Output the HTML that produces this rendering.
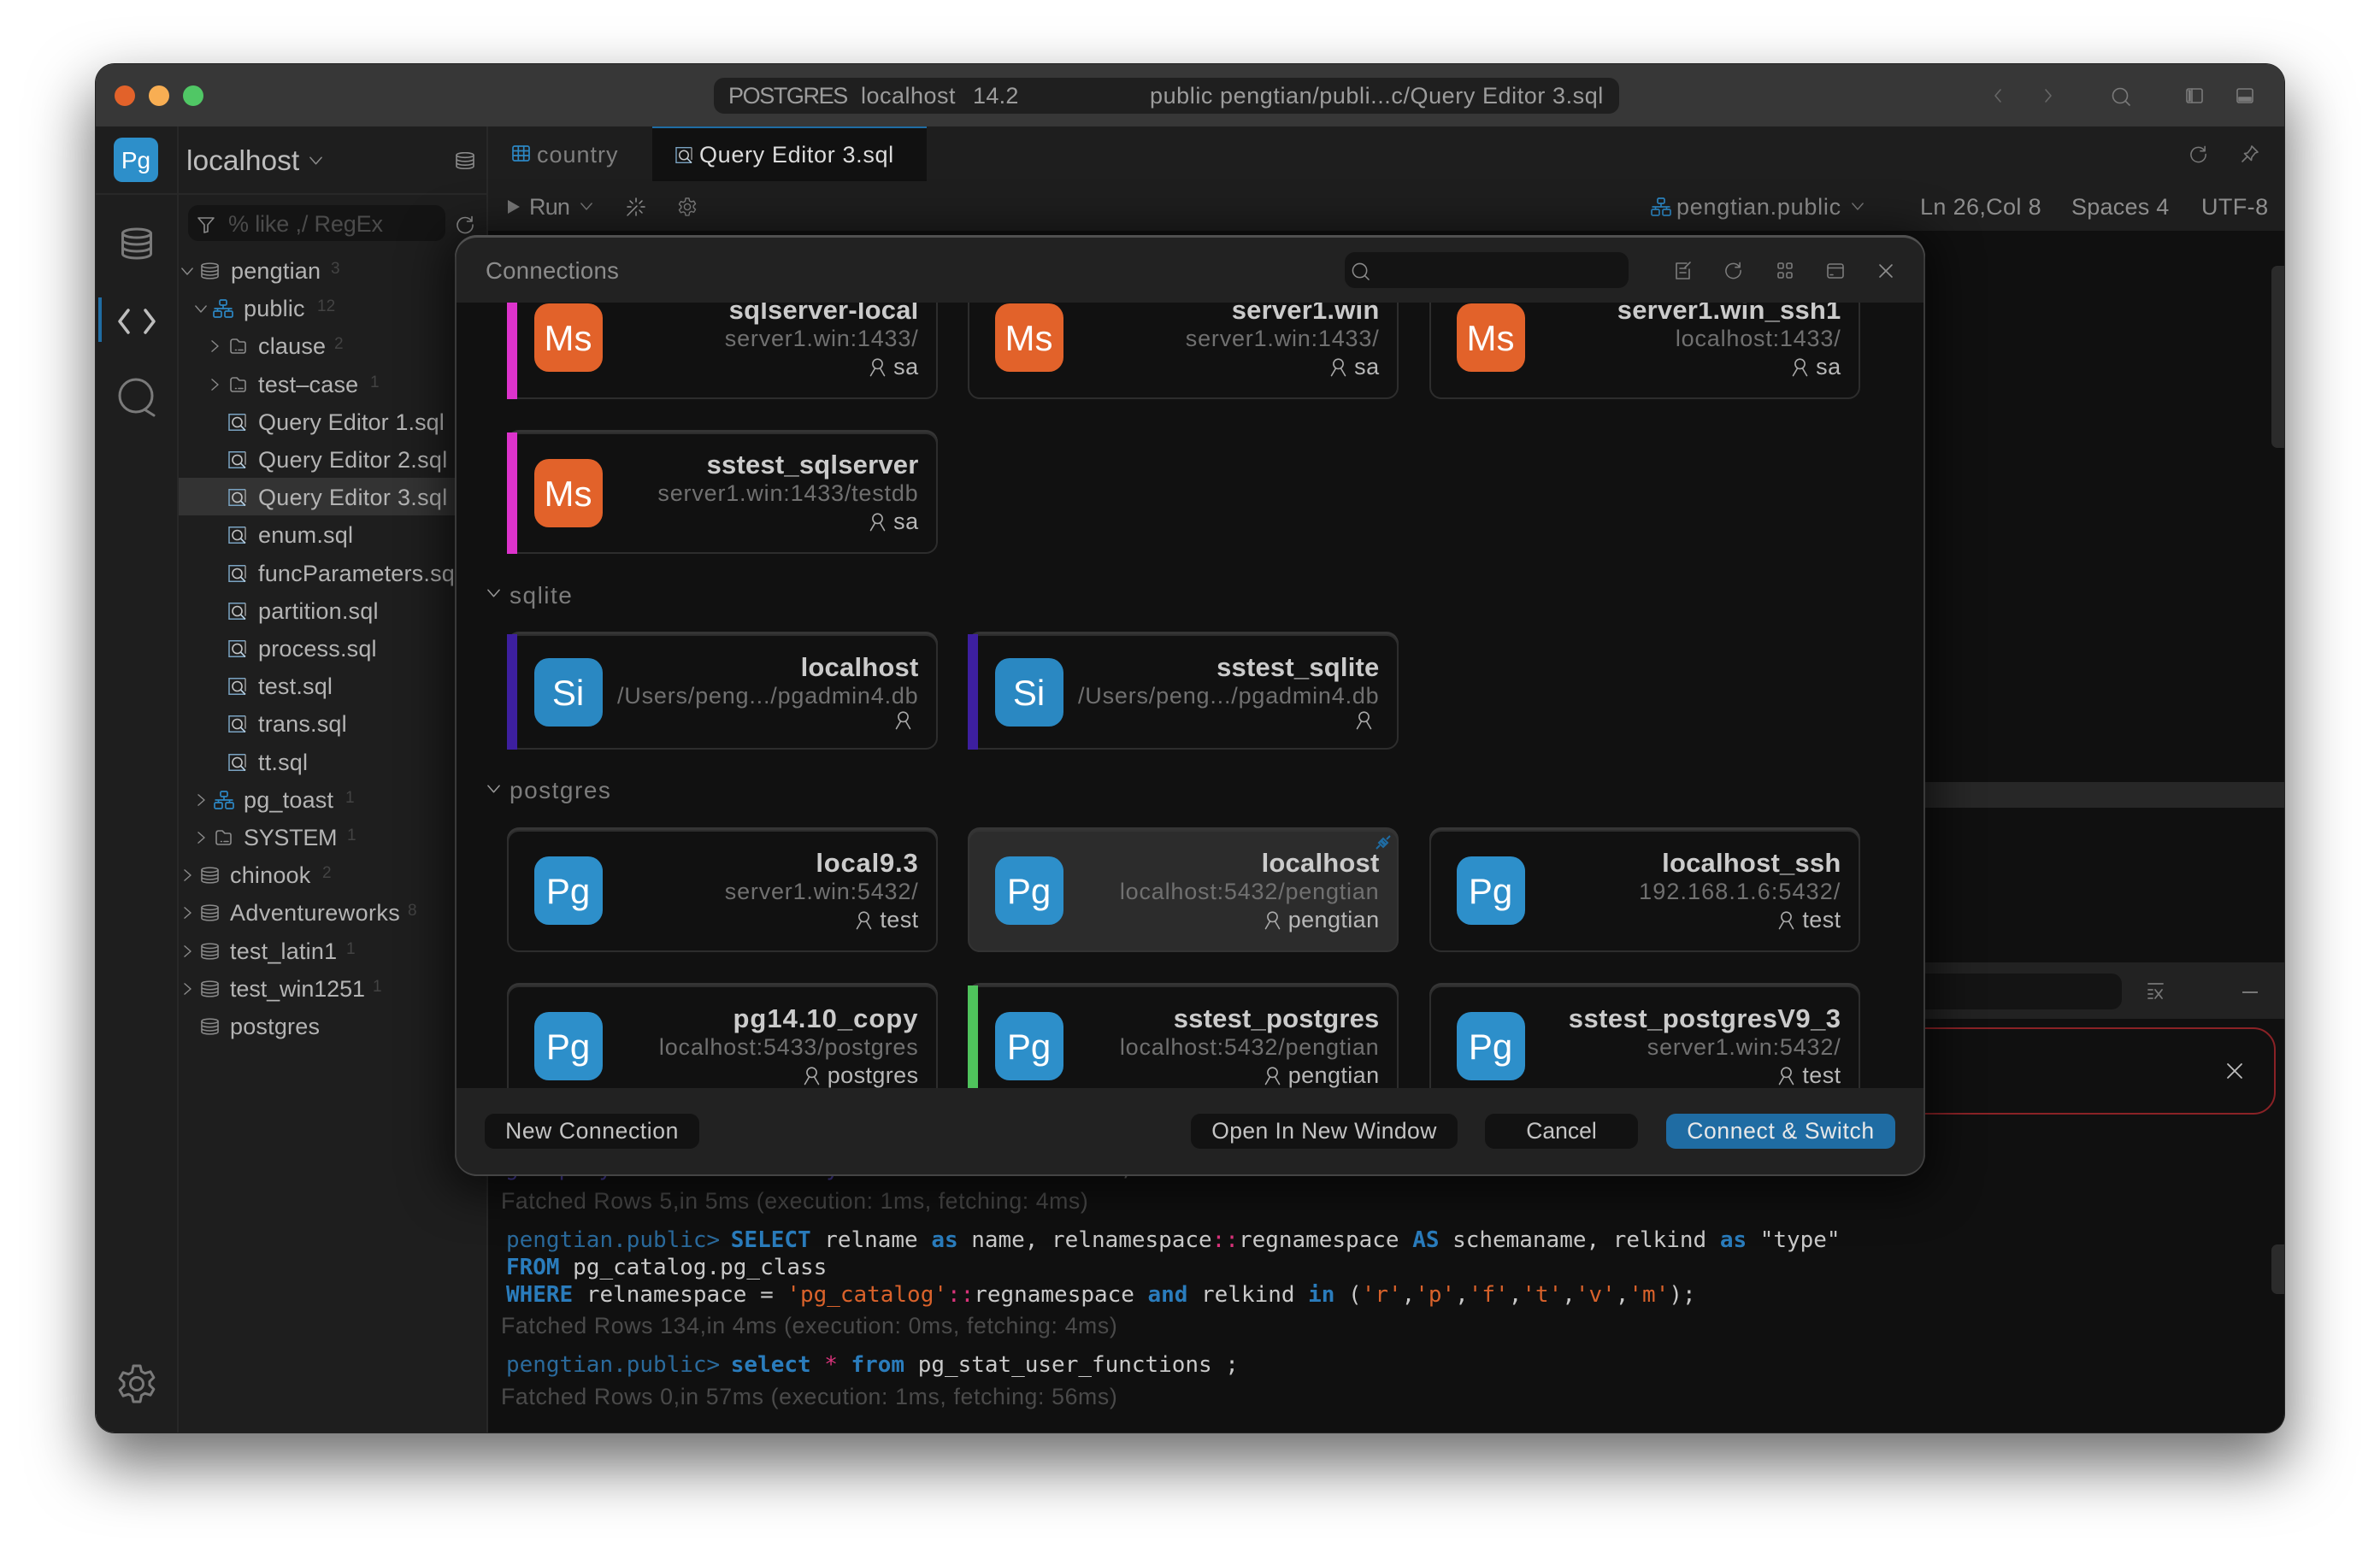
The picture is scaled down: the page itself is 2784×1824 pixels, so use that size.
<!DOCTYPE html>
<html><head><meta charset="utf-8"><title>Connections</title>
<style>
*{box-sizing:border-box}
html,body{margin:0;padding:0;background:#fff}
body{width:2784px;height:1824px;position:relative;overflow:hidden;font-family:"Liberation Sans",Arial,sans-serif}
.a{position:absolute;white-space:nowrap}
svg{position:absolute;overflow:visible;fill:none}
#win{position:absolute;left:112px;top:75px;width:2560px;height:1601px;border-radius:22px;overflow:hidden;box-shadow:0 0 0 1px #222,0 34px 70px 6px rgba(0,0,0,.55)}
#in{position:absolute;left:-112px;top:-75px;width:2784px;height:1824px;background:#1e1e1e}
.r{position:absolute;left:0;width:330px;height:36px}
.t{position:absolute;top:0;font-size:27px;line-height:36px;color:#b4b4b4;white-space:nowrap;letter-spacing:.2px}
.c{position:absolute;top:0;font-size:19px;line-height:32px;color:#434343}
.m{font-family:"DejaVu Sans Mono","Liberation Mono",monospace;font-size:25.98px;line-height:32px;color:#c9c9c9}
.k{color:#2a7cbc;font-weight:bold}.p{color:#2a6a9c}.s{color:#d9622b}.o{color:#d8337a}
.n{margin-left:-3px}
.f{font-size:26.7px;line-height:32px;color:#4a4a4a;letter-spacing:.57px}
#modal{position:absolute;left:532px;top:275px;width:1720px;height:1101px;border-radius:26px;background:#222;overflow:hidden;box-shadow:0 8px 50px 14px rgba(0,0,0,.55),inset 0 3px 0 #505050,inset 0 -2px 0 #454545,inset 2px 0 0 #3a3a3a,inset -2px 0 0 #3a3a3a}
#mb{position:absolute;left:2px;top:79px;width:1716px;height:919px;background:#111;overflow:hidden}
.card{position:absolute;width:504px;height:143px;border:2px solid #2d2d2d;border-radius:14px;box-shadow:0 -3px 0 #353535;background:#111}
.hv{background:#2c2c2c}
.bar{position:absolute;left:-2px;top:-2px;bottom:-2px;width:12px}
.ic{position:absolute;left:30px;top:29px;width:80px;height:80px;border-radius:17px;color:#fff;font-size:42px;line-height:82px;text-align:center}
.ms{background:#e2622a}.pg{background:#2d8fca}.si{background:#2a88c2}
.ti{position:absolute;right:20px;top:21px;font-weight:bold;font-size:31px;line-height:32px;letter-spacing:.2px;color:#cbcbcb;white-space:nowrap}
.ho{position:absolute;right:20px;top:54px;font-size:27px;line-height:32px;letter-spacing:.8px;color:#707070;white-space:nowrap}
.us{position:absolute;right:20px;top:87px;font-size:27px;line-height:32px;letter-spacing:.4px;color:#b8b8b8;white-space:nowrap}
.us svg{position:relative;display:inline-block;width:19px;height:22px;vertical-align:-3px;margin-right:9px}
.btn{position:absolute;height:41px;border-radius:11px;background:#121212;color:#c4c4c4;font-size:26.5px;line-height:41px;text-align:center;white-space:nowrap}
.g{stroke:#8a8a8a;stroke-width:1.6;stroke-linecap:round;stroke-linejoin:round}
.b{stroke:#2d87c4;stroke-width:1.7}
</style></head><body>
<svg width="0" height="0" style="position:absolute">
<defs>
<symbol id="db" viewBox="0 0 22 20"><ellipse cx="11" cy="3.5" rx="10" ry="2.8"/><path d="M1 3.5v13c0 1.6 4.5 2.8 10 2.8s10-1.2 10-2.8v-13M1 8c0 1.6 4.5 2.8 10 2.8S21 9.6 21 8M1 12.4c0 1.6 4.5 2.8 10 2.8s10-1.2 10-2.8"/></symbol>
<symbol id="q" viewBox="0 0 21 20"><path d="M20 .7H1v18.6h19" stroke="#7aa3c2" stroke-width="1.5"/><path d="M20 .7v15" stroke="#9a9a9a" stroke-width="1.5"/><circle cx="10.5" cy="10" r="5.5" stroke="#c4c4c4" stroke-width="1.6"/><path d="M14.5 14l5.5 5.5" stroke="#b8cfe0" stroke-width="1.6"/></symbol>
<symbol id="fo" viewBox="0 0 19 18"><path d="M1 4q0-3 3-3h4l3 3h5q2 0 2 2v8.5q0 2.5-2.5 2.5h-12Q1 17 1 14.5z"/><path d="M10 13.5h5M6.5 13.5h.8"/></symbol>
<symbol id="sc" viewBox="0 0 24 22"><rect x="8" y="1" width="8" height="6" rx="1.5"/><rect x="1" y="14" width="9" height="7" rx="1.5"/><rect x="14" y="14" width="9" height="7" rx="1.5"/><path d="M12 7v4M1.5 11h21M5.5 11v3M18.5 11v3"/></symbol>
<symbol id="u" viewBox="0 0 19 22"><circle cx="9.5" cy="6.8" r="5.6"/><path d="M6.5 12L1.5 20.5M12.5 12l5 8.5"/></symbol>
<symbol id="cr" viewBox="0 0 10 16"><path d="M1 1l8 7-8 7"/></symbol>
<symbol id="cd" viewBox="0 0 16 10"><path d="M1 1l7 8 7-8"/></symbol>
<symbol id="re" viewBox="0 0 22 22"><path d="M18.5 6.5A9 9 0 1 0 20 11M19 1.5V7h-5.5"/></symbol>
</defs>
</svg>
<div id="win"><div id="in">

<!-- titlebar -->
<div class="a" style="left:112px;top:75px;width:2560px;height:73px;background:#373737"></div>
<div class="a" style="left:134px;top:100px;width:24px;height:24px;border-radius:50%;background:#e2622a"></div>
<div class="a" style="left:174px;top:100px;width:24px;height:24px;border-radius:50%;background:#f8ae53"></div>
<div class="a" style="left:214px;top:100px;width:24px;height:24px;border-radius:50%;background:#50c765"></div>
<div class="a" style="left:835px;top:91px;width:1059px;height:42px;border-radius:12px;background:#1f1f1f"></div>
<div class="a" style="left:852px;top:96px;font-size:27px;line-height:32px;color:#9c9c9c;letter-spacing:-1.4px">POSTGRES</div>
<div class="a" style="left:1007px;top:96px;font-size:27px;line-height:32px;color:#9c9c9c;letter-spacing:.5px">localhost</div>
<div class="a" style="left:1138px;top:96px;font-size:27px;line-height:32px;color:#9c9c9c;letter-spacing:.3px">14.2</div>
<div class="a" style="left:1345px;top:96px;font-size:27px;line-height:32px;color:#9c9c9c;letter-spacing:.57px">public pengtian/publi...c/Query Editor 3.sql</div>
<svg class="g" style="left:2332px;top:104px;stroke:#666" width="10" height="16" viewBox="0 0 10 16"><path d="M8 1L2 8l6 7"/></svg>
<svg class="g" style="left:2391px;top:104px;stroke:#666" width="10" height="16" viewBox="0 0 10 16"><path d="M2 1l6 7-6 7"/></svg>
<svg class="g" style="left:2470px;top:102px;stroke:#7a7a7a" width="22" height="22" viewBox="0 0 22 22"><circle cx="10" cy="10" r="8.5"/><path d="M16 16l5 5"/></svg>
<svg class="g" style="left:2557px;top:103px;stroke:#7a7a7a" width="20" height="18" viewBox="0 0 20 18"><rect x="1" y="1" width="18" height="16" rx="2"/><path d="M7 1v16M3 3h2v12H3" fill="#7a7a7a"/></svg>
<svg class="g" style="left:2616px;top:103px;stroke:#7a7a7a" width="20" height="18" viewBox="0 0 20 18"><rect x="1" y="1" width="18" height="16" rx="2"/><path d="M3 11h14v4H3z" fill="#7a7a7a"/></svg>

<!-- activity bar -->
<div class="a" style="left:207px;top:148px;width:2px;height:1528px;background:#282828"></div>
<div class="a" style="left:569px;top:148px;width:2px;height:1528px;background:#282828"></div>
<div class="a" style="left:112px;top:226px;width:458px;height:2px;background:#282828"></div>
<div class="a" style="left:133px;top:161px;width:52px;height:52px;border-radius:10px;background:#2d8fca;color:#fff;font-size:28px;line-height:54px;text-align:center">Pg</div>
<svg class="g" style="left:142px;top:267px;stroke:#7a7a7a;stroke-width:3" width="36" height="36" viewBox="0 0 36 36"><ellipse cx="18" cy="6" rx="16.5" ry="5"/><path d="M1.5 6v24c0 2.8 7.4 5 16.5 5s16.5-2.2 16.5-5V6M1.5 14c0 2.8 7.4 5 16.5 5s16.5-2.2 16.5-5M1.5 22c0 2.8 7.4 5 16.5 5s16.5-2.2 16.5-5"/></svg>
<div class="a" style="left:115px;top:348px;width:4px;height:52px;background:#1f6ca3"></div>
<svg class="g" style="left:138px;top:360px;stroke:#bdbdbd;stroke-width:3.5" width="44" height="32" viewBox="0 0 44 32"><path d="M12 3L2 16l10 13M32 3l10 13-10 13"/></svg>
<svg class="g" style="left:138px;top:443px;stroke:#7a7a7a;stroke-width:3" width="44" height="44" viewBox="0 0 44 44"><circle cx="21" cy="20" r="19"/><path d="M31 36l11 7"/></svg>
<svg class="g" style="left:137px;top:1596px;stroke:#7a7a7a;stroke-width:3" width="46" height="46" viewBox="0 0 46 46"><circle cx="23" cy="23" r="7.5"/><path d="M19 2h8l1.5 6.5 4 2.3 6.4-2 4 6.9-4.9 4.6v4.4l4.9 4.6-4 6.9-6.4-2-4 2.3L27 44h-8l-1.5-6.5-4-2.3-6.4 2-4-6.9 4.9-4.6v-4.4L3.1 16.7l4-6.9 6.4 2 4-2.3z"/></svg>

<!-- sidebar header -->
<div class="a" style="left:218px;top:171px;font-size:33.5px;line-height:36px;color:#bdbdbd">localhost</div>
<svg class="g" style="left:362px;top:183px;stroke:#8a8a8a" width="15" height="10"><use href="#cd"/></svg>
<svg class="g" style="left:533px;top:178px;stroke:#8a8a8a" width="22" height="20"><use href="#db"/></svg>
<div class="a" style="left:220px;top:240px;width:301px;height:42px;border-radius:12px;background:#141414"></div>
<svg class="g" style="left:231px;top:253px;stroke:#8a8a8a" width="20" height="20" viewBox="0 0 20 20"><path d="M1 2h18l-7 8v8l-4 1V10z"/></svg>
<div class="a" style="left:267px;top:246px;font-size:27px;line-height:32px;color:#4b4b4b;letter-spacing:-.15px">% like ,/ RegEx</div>
<svg class="g" style="left:533px;top:252px;stroke:#8c8c8c" width="22" height="22"><use href="#re"/></svg>

<!-- tree -->
<div class="a" style="left:209px;top:228px;width:323px;height:1200px;overflow:hidden"><div style="position:absolute;left:-209px;top:-229px;width:800px;height:1500px">
<div class="a" style="left:207px;top:560px;width:330px;height:44px;background:#333"></div>
<div class="r" style="top:300px"><svg class="g" style="left:212px;top:14px" width="14" height="9"><use href="#cd"/></svg><svg class="g" style="left:235px;top:8px" width="21" height="20"><use href="#db"/></svg><div class="t" style="left:270px">pengtian</div><div class="c" style="left:387px">3</div></div>
<div class="r" style="top:344px"><svg class="g" style="left:228px;top:14px" width="14" height="9"><use href="#cd"/></svg><svg class="b" style="left:249px;top:7px" width="24" height="22"><use href="#sc"/></svg><div class="t" style="left:285px">public</div><div class="c" style="left:371px">12</div></div>
<div class="r" style="top:388.4px"><svg class="g" style="left:247px;top:11px" width="9" height="14"><use href="#cr"/></svg><svg class="g" style="left:269px;top:9px" width="19" height="18"><use href="#fo"/></svg><div class="t" style="left:302px">clause</div><div class="c" style="left:391px">2</div></div>
<div class="r" style="top:432.6px"><svg class="g" style="left:247px;top:11px" width="9" height="14"><use href="#cr"/></svg><svg class="g" style="left:269px;top:9px" width="19" height="18"><use href="#fo"/></svg><div class="t" style="left:302px">test–case</div><div class="c" style="left:433px">1</div></div>
<div class="r" style="top:476.8px"><svg style="left:267px;top:8px" width="21" height="20"><use href="#q"/></svg><div class="t" style="left:302px;letter-spacing:.1px">Query Editor 1.sql</div></div>
<div class="r" style="top:521px"><svg style="left:267px;top:8px" width="21" height="20"><use href="#q"/></svg><div class="t" style="left:302px;letter-spacing:.3px">Query Editor 2.sql</div></div>
<div class="r" style="top:565px"><svg style="left:267px;top:8px" width="21" height="20"><use href="#q"/></svg><div class="t" style="left:302px;letter-spacing:.3px">Query Editor 3.sql</div></div>
<div class="r" style="top:609.4px"><svg style="left:267px;top:8px" width="21" height="20"><use href="#q"/></svg><div class="t" style="left:302px">enum.sql</div></div>
<div class="r" style="top:653.6px"><svg style="left:267px;top:8px" width="21" height="20"><use href="#q"/></svg><div class="t" style="left:302px">funcParameters.sql</div></div>
<div class="r" style="top:697.8px"><svg style="left:267px;top:8px" width="21" height="20"><use href="#q"/></svg><div class="t" style="left:302px">partition.sql</div></div>
<div class="r" style="top:742px"><svg style="left:267px;top:8px" width="21" height="20"><use href="#q"/></svg><div class="t" style="left:302px">process.sql</div></div>
<div class="r" style="top:786.2px"><svg style="left:267px;top:8px" width="21" height="20"><use href="#q"/></svg><div class="t" style="left:302px">test.sql</div></div>
<div class="r" style="top:830.4px"><svg style="left:267px;top:8px" width="21" height="20"><use href="#q"/></svg><div class="t" style="left:302px">trans.sql</div></div>
<div class="r" style="top:874.6px"><svg style="left:267px;top:8px" width="21" height="20"><use href="#q"/></svg><div class="t" style="left:302px">tt.sql</div></div>
<div class="r" style="top:918.8px"><svg class="g" style="left:231px;top:11px" width="9" height="14"><use href="#cr"/></svg><svg class="b" style="left:250px;top:7px" width="24" height="22"><use href="#sc"/></svg><div class="t" style="left:285px">pg_toast</div><div class="c" style="left:404px">1</div></div>
<div class="r" style="top:963px"><svg class="g" style="left:231px;top:11px" width="9" height="14"><use href="#cr"/></svg><svg class="g" style="left:252px;top:9px" width="19" height="18"><use href="#fo"/></svg><div class="t" style="left:285px;letter-spacing:-.3px">SYSTEM</div><div class="c" style="left:406px">1</div></div>
<div class="r" style="top:1007px"><svg class="g" style="left:215px;top:11px" width="9" height="14"><use href="#cr"/></svg><svg class="g" style="left:235px;top:8px" width="21" height="20"><use href="#db"/></svg><div class="t" style="left:269px">chinook</div><div class="c" style="left:377px">2</div></div>
<div class="r" style="top:1051.4px"><svg class="g" style="left:215px;top:11px" width="9" height="14"><use href="#cr"/></svg><svg class="g" style="left:235px;top:8px" width="21" height="20"><use href="#db"/></svg><div class="t" style="left:269px;letter-spacing:.4px">Adventureworks</div><div class="c" style="left:477px">8</div></div>
<div class="r" style="top:1095.6px"><svg class="g" style="left:215px;top:11px" width="9" height="14"><use href="#cr"/></svg><svg class="g" style="left:235px;top:8px" width="21" height="20"><use href="#db"/></svg><div class="t" style="left:269px">test_latin1</div><div class="c" style="left:405px">1</div></div>
<div class="r" style="top:1139.8px"><svg class="g" style="left:215px;top:11px" width="9" height="14"><use href="#cr"/></svg><svg class="g" style="left:235px;top:8px" width="21" height="20"><use href="#db"/></svg><div class="t" style="left:269px;letter-spacing:-.1px">test_win1251</div><div class="c" style="left:436px">1</div></div>
<div class="r" style="top:1184px"><svg class="g" style="left:235px;top:8px" width="21" height="20"><use href="#db"/></svg><div class="t" style="left:269px">postgres</div></div>
</div></div>

<!-- main tabs -->
<svg class="b" style="left:599px;top:170px" width="21" height="19" viewBox="0 0 21 19"><rect x="1" y="1" width="19" height="17" rx="2"/><path d="M1 6.5h19M1 12h19M7.3 1v17M13.7 1v17"/></svg>
<div class="a" style="left:628px;top:164px;font-size:27px;line-height:34px;color:#7f7f7f;letter-spacing:1px">country</div>
<div class="a" style="left:763px;top:148px;width:321px;height:64px;background:#111;border-top:2px solid #1f6ca3"></div>
<svg style="left:790px;top:172px" width="20" height="19"><use href="#q"/></svg>
<div class="a" style="left:818px;top:164px;font-size:27px;line-height:34px;color:#dcdcdc;letter-spacing:.65px">Query Editor 3.sql</div>
<svg class="g" style="left:2561px;top:170px;stroke:#777" width="21" height="21"><use href="#re"/></svg>
<svg class="g" style="left:2622px;top:170px;stroke:#777" width="20" height="20" viewBox="0 0 20 20"><path d="M12 1l7 7-3 1-4 5-.5 3.5-8-8L7 9l4-5zM6.5 13.5L1 19"/></svg>

<!-- toolbar -->
<svg style="left:594px;top:234px" width="14" height="16" viewBox="0 0 14 16"><path d="M0 0l14 8-14 8z" fill="#777"/></svg>
<div class="a" style="left:619px;top:225px;font-size:27px;line-height:34px;color:#8e8e8e;letter-spacing:-.8px">Run</div>
<svg class="g" style="left:679px;top:237px;stroke:#777" width="14" height="9"><use href="#cd"/></svg>
<svg class="g" style="left:733px;top:231px;stroke:#9a9a9a" width="22" height="22" viewBox="0 0 22 22"><path d="M1 21L12 10M11 1v4M18 4l-3 3M21 11h-4M18 18l-3-3M11 21v-4M4 4l3 3M1 11h4" stroke-width="1.5"/></svg>
<svg class="g" style="left:793px;top:231px;stroke:#7c7c7c" width="22" height="22" viewBox="0 0 46 46"><circle cx="23" cy="23" r="7.5" stroke-width="3"/><path stroke-width="3" d="M19 2h8l1.5 6.5 4 2.3 6.4-2 4 6.9-4.9 4.6v4.4l4.9 4.6-4 6.9-6.4-2-4 2.3L27 44h-8l-1.5-6.5-4-2.3-6.4 2-4-6.9 4.9-4.6v-4.4L3.1 16.7l4-6.9 6.4 2 4-2.3z"/></svg>
<svg class="b" style="left:1931px;top:231px" width="24" height="22"><use href="#sc"/></svg>
<div class="a" style="left:1961px;top:225px;font-size:27px;line-height:34px;color:#8e8e8e;letter-spacing:.75px">pengtian.public</div>
<svg class="g" style="left:2166px;top:237px;stroke:#777" width="14" height="9"><use href="#cd"/></svg>
<div class="a" style="left:2246px;top:225px;font-size:27px;line-height:34px;color:#8e8e8e;letter-spacing:.35px">Ln 26,Col 8</div>
<div class="a" style="left:2423px;top:225px;font-size:27px;line-height:34px;color:#8e8e8e;letter-spacing:.25px">Spaces 4</div>
<div class="a" style="left:2575px;top:225px;font-size:27px;line-height:34px;color:#8e8e8e;letter-spacing:.4px">UTF-8</div>

<!-- editor -->
<div class="a" style="left:571px;top:270px;width:2101px;height:1406px;background:#101010"></div>
<div class="a" style="left:2251px;top:915px;width:421px;height:30px;background:#272727"></div>
<div class="a" style="left:2657px;top:311px;width:15px;height:213px;background:#2b2b2b;border-radius:7px 0 0 7px"></div>
<div class="a" style="left:2657px;top:1456px;width:15px;height:58px;background:#2b2b2b;border-radius:7px 0 0 7px"></div>
<div class="a" style="left:571px;top:1126px;width:2101px;height:66px;background:#222"></div>
<div class="a" style="left:600px;top:1139px;width:1882px;height:42px;border-radius:12px;background:#141414"></div>
<svg class="g" style="left:2512px;top:1150px;stroke:#777;stroke-width:1.8" width="19" height="20" viewBox="0 0 19 20"><path d="M1 1h17M1 8h5M1 13h5M1 18h5M9 8l8 10M17 8l-8 10"/></svg>
<div class="a" style="left:2623px;top:1160px;width:18px;height:2px;background:#777"></div>
<div class="a" style="left:1000px;top:1202px;width:1661.5px;height:102px;border:2px solid #8a2226;border-radius:26px;background:#101010"></div>
<svg class="g" style="left:2605px;top:1244px;stroke:#bdbdbd;stroke-width:1.8" width="18" height="18"><path d="M1 1l16 16M17 1L1 17"/></svg>

<div class="a m" style="left:591px;top:1351px;color:#6a6a6a"><span style="color:#4a3fa0">group by</span> relname <span style="color:#4a3fa0">order by</span> count <span style="color:#4a3fa0">desc</span> limit 100;</div>
<div class="a f" style="left:586px;top:1389px">Fatched Rows 5,in 5ms (execution: 1ms, fetching: 4ms)</div>
<div class="a m" style="left:592px;top:1434.5px"><span class="p">pengtian.public&gt;</span> <span class="k n">SELECT</span> relname <span class="k">as</span> name, relnamespace<span class="o">::</span>regnamespace <span class="k">AS</span> schemaname, relkind <span class="k">as</span> "type"</div>
<div class="a m" style="left:592px;top:1466.5px"><span class="k">FROM</span> pg_catalog.pg_class</div>
<div class="a m" style="left:592px;top:1498.5px"><span class="k">WHERE</span> relnamespace = <span class="s">'pg_catalog'</span><span class="o">::</span>regnamespace <span class="k">and</span> relkind <span class="k">in</span> (<span class="s">'r'</span>,<span class="s">'p'</span>,<span class="s">'f'</span>,<span class="s">'t'</span>,<span class="s">'v'</span>,<span class="s">'m'</span>);</div>
<div class="a f" style="left:586px;top:1535px;letter-spacing:.63px">Fatched Rows 134,in 4ms (execution: 0ms, fetching: 4ms)</div>
<div class="a m" style="left:592px;top:1580.5px"><span class="p">pengtian.public&gt;</span> <span class="k n">select</span> <span class="o">*</span> <span class="k">from</span> pg_stat_user_functions ;</div>
<div class="a f" style="left:586px;top:1617.5px;letter-spacing:.63px">Fatched Rows 0,in 57ms (execution: 1ms, fetching: 56ms)</div>

<!-- modal -->
<div id="modal">
<div class="a" style="left:36px;top:24px;font-size:27.5px;line-height:36px;color:#8c8c8c;letter-spacing:.3px">Connections</div>
<div class="a" style="left:1041px;top:20px;width:332px;height:42px;border-radius:12px;background:#141414"></div>
<svg class="g" style="left:1049px;top:32px;stroke:#8a8a8a" width="21" height="21" viewBox="0 0 22 22"><circle cx="10" cy="10" r="8.5"/><path d="M16 16l5 5"/></svg>
<svg class="g" style="left:1428px;top:31px;stroke:#7c7c7c" width="20" height="21" viewBox="0 0 20 21"><path d="M13 2H1v18h15V9M5 8h7M5 13h7M17 1l-6 6"/></svg>
<svg class="g" style="left:1485px;top:31px;stroke:#7c7c7c" width="21" height="21"><use href="#re"/></svg>
<svg class="g" style="left:1547px;top:32px;stroke:#7c7c7c" width="18" height="19" viewBox="0 0 18 19"><rect x="1" y="1" width="6" height="6" rx="1.5"/><rect x="11" y="1" width="6" height="6" rx="1.5"/><rect x="1" y="12" width="6" height="6" rx="1.5"/><rect x="11" y="12" width="6" height="6" rx="1.5"/></svg>
<svg class="g" style="left:1605px;top:33px;stroke:#7c7c7c" width="20" height="18" viewBox="0 0 20 18"><rect x="1" y="1" width="18" height="16" rx="2.5"/><path d="M1 5.5h18M4 13.5h3"/></svg>
<svg class="g" style="left:1666px;top:34px;stroke:#8e8e8e" width="16" height="16"><path d="M1 1l14 14M15 1L1 15"/></svg>

<div id="mb">
<div class="card" style="left:58.5px;top:-30px"><div class="bar" style="background:#dd33cc"></div><div class="ic ms">Ms</div><div class="ti">sqlserver-local</div><div class="ho">server1.win:1433/</div><div class="us"><svg class="g" style="stroke:#aaa"><use href="#u"/></svg>sa</div></div>
<div class="card" style="left:597.5px;top:-30px"><div class="ic ms">Ms</div><div class="ti">server1.win</div><div class="ho">server1.win:1433/</div><div class="us"><svg class="g" style="stroke:#aaa"><use href="#u"/></svg>sa</div></div>
<div class="card" style="left:1137.5px;top:-30px"><div class="ic ms">Ms</div><div class="ti">server1.win_ssh1</div><div class="ho">localhost:1433/</div><div class="us"><svg class="g" style="stroke:#aaa"><use href="#u"/></svg>sa</div></div>

<div class="card" style="left:58.5px;top:152px;height:142px"><div class="bar" style="background:#dd33cc"></div><div class="ic ms">Ms</div><div class="ti" style="top:20px">sstest_sqlserver</div><div class="ho" style="top:53px">server1.win:1433/testdb</div><div class="us" style="top:86px"><svg class="g" style="stroke:#aaa"><use href="#u"/></svg>sa</div></div>

<svg class="g" style="left:36px;top:335px;stroke:#999" width="15" height="10"><use href="#cd"/></svg>
<div class="a" style="left:62px;top:325px;font-size:28px;line-height:36px;color:#7c7c7c;letter-spacing:1.5px">sqlite</div>

<div class="card" style="left:58.5px;top:388px;height:135px"><div class="bar" style="background:#3d1f9f"></div><div class="ic si" style="top:26px">Si</div><div class="ti">localhost</div><div class="ho" style="letter-spacing:.8px">/Users/peng.../pgadmin4.db</div><div class="us" style="top:82px;right:29px"><svg class="g" style="stroke:#aaa;margin:0"><use href="#u"/></svg></div></div>
<div class="card" style="left:597.5px;top:388px;height:135px"><div class="bar" style="background:#3d1f9f"></div><div class="ic si" style="top:26px">Si</div><div class="ti">sstest_sqlite</div><div class="ho" style="letter-spacing:.8px">/Users/peng.../pgadmin4.db</div><div class="us" style="top:82px;right:29px"><svg class="g" style="stroke:#aaa;margin:0"><use href="#u"/></svg></div></div>

<svg class="g" style="left:36px;top:564px;stroke:#999" width="15" height="10"><use href="#cd"/></svg>
<div class="a" style="left:62px;top:553px;font-size:28px;line-height:36px;color:#7c7c7c;letter-spacing:1.5px">postgres</div>

<div class="card" style="left:58.5px;top:617px"><div class="ic pg">Pg</div><div class="ti" style="letter-spacing:.8px">local9.3</div><div class="ho">server1.win:5432/</div><div class="us"><svg class="g" style="stroke:#aaa"><use href="#u"/></svg>test</div></div>
<div class="card hv" style="left:597.5px;top:617px;border-color:#333"><div class="ic pg">Pg</div><div class="ti">localhost</div><div class="ho">localhost:5432/pengtian</div><div class="us"><svg class="g" style="stroke:#aaa"><use href="#u"/></svg>pengtian</div><svg style="left:475px;top:4px;stroke:#1f6ca3;stroke-width:2" width="18" height="17" viewBox="0 0 18 17"><path d="M1 16l4-4M17 1l-4 4M4 9l5 5 2-2-5-5zM7 6l5 5 2-2-5-5z"/></svg></div>
<div class="card" style="left:1137.5px;top:617px"><div class="ic pg">Pg</div><div class="ti">localhost_ssh</div><div class="ho" style="letter-spacing:1.1px">192.168.1.6:5432/</div><div class="us"><svg class="g" style="stroke:#aaa"><use href="#u"/></svg>test</div></div>

<div class="card" style="left:58.5px;top:799px"><div class="ic pg">Pg</div><div class="ti" style="letter-spacing:1px">pg14.10_copy</div><div class="ho">localhost:5433/postgres</div><div class="us"><svg class="g" style="stroke:#aaa"><use href="#u"/></svg>postgres</div></div>
<div class="card" style="left:597.5px;top:799px"><div class="bar" style="background:#4fc35c"></div><div class="ic pg">Pg</div><div class="ti">sstest_postgres</div><div class="ho">localhost:5432/pengtian</div><div class="us"><svg class="g" style="stroke:#aaa"><use href="#u"/></svg>pengtian</div></div>
<div class="card" style="left:1137.5px;top:799px"><div class="ic pg">Pg</div><div class="ti" style="letter-spacing:.45px">sstest_postgresV9_3</div><div class="ho">server1.win:5432/</div><div class="us"><svg class="g" style="stroke:#aaa"><use href="#u"/></svg>test</div></div>
</div>

<div class="btn" style="left:35px;top:1028px;width:251px;letter-spacing:.6px">New Connection</div>
<div class="btn" style="left:861px;top:1028px;width:312px;letter-spacing:.4px">Open In New Window</div>
<div class="btn" style="left:1205px;top:1028px;width:179px">Cancel</div>
<div class="btn" style="left:1417px;top:1028px;width:268px;background:#1f6ca3;color:#e8e8e8;letter-spacing:.65px">Connect &amp; Switch</div>
</div>

</div></div>
</body></html>
